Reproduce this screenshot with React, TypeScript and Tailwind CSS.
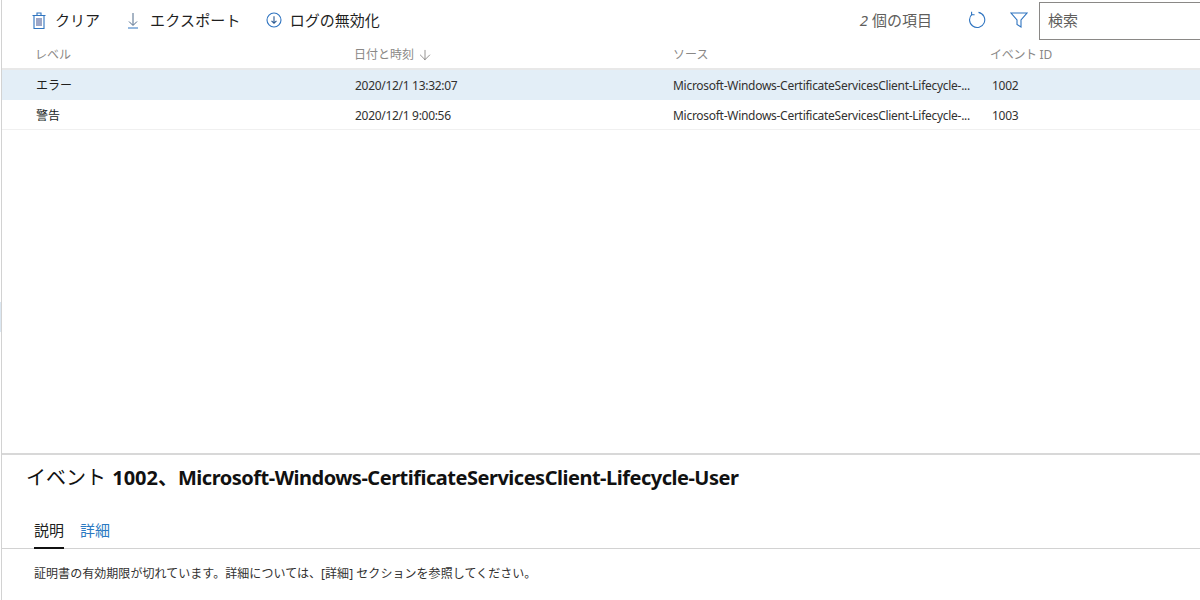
import { ArrowDown } from 'lucide-react';

const font = "font-['Noto_Sans','Noto_Sans_CJK_JP',sans-serif]";

const rows = [
  { level: 'エラー', date: '2020/12/1 13:32:07', source: 'Microsoft-Windows-CertificateServicesClient-Lifecycle-...', id: '1002', selected: true },
  { level: '警告', date: '2020/12/1 9:00:56', source: 'Microsoft-Windows-CertificateServicesClient-Lifecycle-...', id: '1003', selected: false },
];

function RefreshIcon() {
  return (
    <svg width="18" height="18" viewBox="0 0 18 18" fill="none" stroke="#2f74c0" strokeWidth="1.1">
      <path d="M10.5 1.4a7.6 7.6 0 1 1-6.4 1.8" />
      <path d="M3.6 0.8v3h3" />
    </svg>
  );
}

function DisableIcon() {
  return (
    <svg width="16" height="16" viewBox="0 0 16 16" fill="none" stroke="#2f74c0" strokeWidth="1.1">
      <circle cx="8" cy="8" r="7" />
      <path d="M8 4.2v7M5.5 8.8 8 11.2l2.5-2.4" stroke="#2c5a92" />
    </svg>
  );
}

function FunnelIcon() {
  return (
    <svg width="18" height="16" viewBox="0 0 18 16" fill="none" stroke="#2f74c0" strokeWidth="1.1">
      <path d="M1 1h16l-6 7v7l-4-2.5V8z" />
    </svg>
  );
}

function ExportIcon() {
  return (
    <svg width="12" height="17" viewBox="0 0 12 17" fill="none">
      <path d="M6 1v12M2 9.5 6 13.5l4-4" stroke="#4f6a8a" strokeWidth="1" />
      <path d="M1 16h10" stroke="#2f74c0" strokeWidth="1" />
    </svg>
  );
}

function TrashIcon() {
  return (
    <svg width="14" height="17" viewBox="0 0 14 17" fill="none" stroke="#2f74c0" strokeWidth="1.1">
      <path d="M0.5 3.5h13M5 3.5V1h4v2.5M2 3.5v13h10v-13" />
      <path d="M5 6v8M7 6v8M9 6v8" stroke="#4d5f9a" />
    </svg>
  );
}

export default function App() {
  return (
    <div className={`relative flex h-[600px] w-[1200px] flex-col overflow-hidden bg-white ${font}`}>
      <div className="absolute left-0 top-[302px] h-[30px] w-[1px] bg-[#dbe7f2]" />
      <div className="ml-[1px] flex h-full flex-col border-l-[1px] border-[#d2d2d2]">
        <div className="flex h-[40px] items-center text-[15px] text-[#1f1f1f]">
          <div className="ml-[30px] flex items-center gap-[9px]">
            <TrashIcon />
            <span>クリア</span>
          </div>
          <div className="ml-[27px] flex items-center gap-[11px]">
            <ExportIcon />
            <span className="tracking-[0.2px]">エクスポート</span>
          </div>
          <div className="ml-[25px] flex items-center gap-[8px]">
            <DisableIcon />
            <span>ログの無効化</span>
          </div>
          <span className="ml-auto text-[#605e5c]"><i>2</i> 個の項目</span>
          <div className="ml-[36px] flex items-center"><RefreshIcon /></div>
          <div className="ml-[24px] flex items-center"><FunnelIcon /></div>
          <div className="ml-[11px] -mr-[39px] mt-[1px] flex h-[38px] w-[200px] items-center border border-[#8a8886] px-[8px] text-[#605e5c]">検索</div>
        </div>
        <div className="grid h-[30px] grid-cols-[319px_318px_318px_1fr] items-center border-b-[2px] border-[#e8e8e8] pl-[33px] pt-[1px] text-[12px] text-[#8a8886]">
          <span>レベル</span>
          <span className="flex items-center gap-[3px]">日付と時刻<ArrowDown size={16} strokeWidth={1} className="text-[#605e5c]" /></span>
          <span className="pl-[1px]">ソース</span>
          <span className="tracking-[-0.3px]">イベント ID</span>
        </div>
        {rows.map((r) => (
          <div
            key={r.id}
            className={`grid h-[30px] grid-cols-[319px_318px_319px_1fr] items-center border-b pl-[34px] pt-[2px] text-[12px] text-[#323130] ${r.selected ? 'border-transparent bg-[#e3eef7]' : 'border-[#f0f0f0]'}`}
          >
            <span className="text-[#201f1e]">{r.level}</span>
            <span className="tracking-[-0.3px]">{r.date}</span>
            <span className="whitespace-nowrap tracking-[-0.28px]">{r.source}</span>
            <span className="tracking-[-0.3px]">{r.id}</span>
          </div>
        ))}
        <div className="flex-1" />
        <div className="h-[147px] border-t-[2px] border-[#d8d8d8]">
          <h2 className="ml-[24px] mt-[9px] text-[20px] leading-[28px] text-[#111]">
            イベント <span className="ml-[1px] font-bold">1002、</span>
            <span className="font-bold tracking-[-0.49px]">Microsoft-Windows-CertificateServicesClient-Lifecycle-User</span>
          </h2>
          <div className="mt-[24px] flex h-[33px] border-b border-[#d2d2d2] pl-[32px] text-[15px]">
            <span className="h-[33px] border-b-[2px] border-[#111] text-[#201f1e] leading-[28px]">説明</span>
            <span className="ml-[16px] leading-[28px] text-[#2b79c2]">詳細</span>
          </div>
          <p className="ml-[32px] mt-[16px] text-[12px] leading-[18px] tracking-[0.05px] text-[#323130]">
            証明書の有効期限が切れています。詳細については、[詳細] セクションを参照してください。
          </p>
        </div>
      </div>
    </div>
  );
}
